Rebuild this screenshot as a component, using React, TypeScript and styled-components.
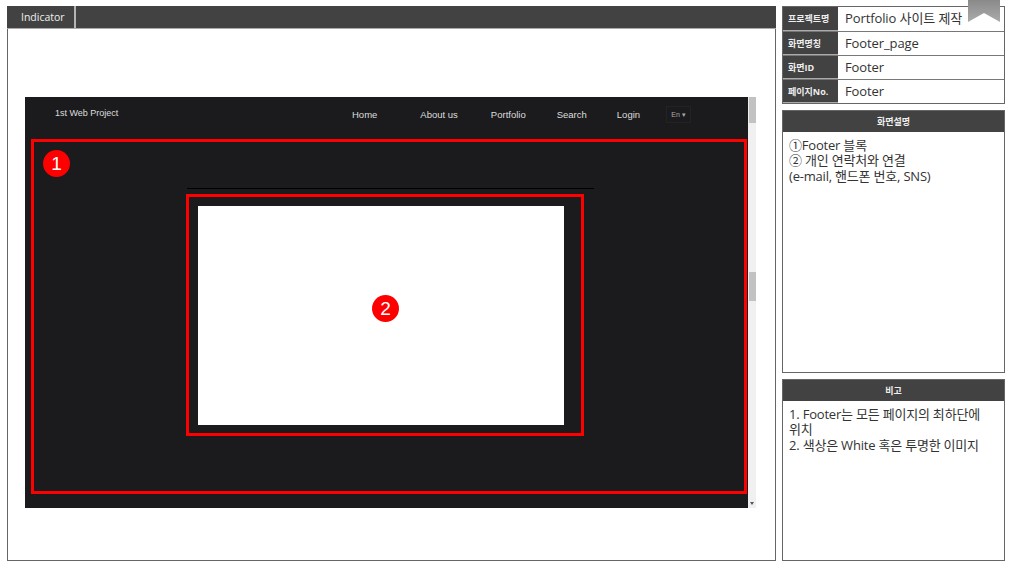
import React from 'react';
import styled, { createGlobalStyle } from 'styled-components';

const GlobalStyle = createGlobalStyle`
  html, body {
    margin: 0;
    padding: 0;
    background: #fff;
    overflow: hidden;
  }
  body {
    font-family: 'Open Sans', 'Noto Sans CJK KR', sans-serif;
    color: #333;
  }
`;

const Page = styled.div`
  width: 1012px;
  height: 568px;
  box-sizing: border-box;
  padding: 6px 7px 7px 7px;
  display: flex;
  gap: 6px;
`;

const MainPanel = styled.section`
  width: 769px;
  box-sizing: border-box;
  border: 1px solid #666;
  border-top: 0;
  display: flex;
  flex-direction: column;
`;

const IndicatorBar = styled.header`
  height: 22px;
  margin: 0 -1px;
  background: #424242;
  border-bottom: 1px solid #aaa;
  box-sizing: content-box;
  display: flex;
  flex-shrink: 0;
`;

const IndicatorTab = styled.div`
  width: 69px;
  box-sizing: border-box;
  border-right: 2px solid #b5b5b5;
  padding-left: 14px;
  color: #eee;
  font-size: 10.5px;
  line-height: 23px;
`;

const ScreenRow = styled.div`
  display: flex;
  margin: 68px 0 0 17px;
`;

const Screen = styled.div`
  width: 723px;
  height: 411px;
  background: #1b1b1d;
  display: flex;
  flex-direction: column;
`;

const SiteNav = styled.nav`
  height: 42px;
  flex-shrink: 0;
  box-sizing: border-box;
  padding-bottom: 8px;
  display: flex;
  align-items: center;
  font-family: 'Liberation Sans', Arial, sans-serif;
  font-size: 9.5px;
  color: #ddd;
`;

const Brand = styled.div`
  width: 297px;
  padding: 0 0 2px 30px;
  font-size: 9px;
`;

const NavItem = styled.div<{ $gap: number }>`
  margin-right: ${(p) => p.$gap}px;
`;

const LangButton = styled.div`
  width: 25px;
  height: 17px;
  border: 1px solid #222325;
  box-sizing: border-box;
  font-size: 7px;
  line-height: 15px;
  text-align: center;
  color: #aaa;
`;

const OuterFrame = styled.div`
  position: relative;
  width: 716px;
  height: 355px;
  margin-left: 6px;
  box-sizing: border-box;
  border: 3px solid #f00;
  padding: 46px 0 0 152px;
`;

const TopRule = styled.div`
  width: 407px;
  height: 1px;
  margin-left: 1px;
  background: #000;
`;

const InnerFrame = styled.div`
  position: relative;
  width: 398px;
  height: 242px;
  margin-top: 5px;
  box-sizing: border-box;
  border: 3px solid #f00;
  padding: 9px 17px 8px 9px;
`;

const WhiteBlock = styled.div`
  height: 100%;
  background: #fff;
`;

const Badge = styled.div<{ $left: number; $top: number }>`
  position: absolute;
  left: ${(p) => p.$left}px;
  top: ${(p) => p.$top}px;
  width: 27px;
  height: 27px;
  border-radius: 50%;
  background: #f00;
  color: #fff;
  font-family: 'Liberation Sans', Arial, sans-serif;
  font-size: 19px;
  line-height: 27px;
  text-align: center;
`;

const Scrollbar = styled.div`
  position: relative;
  width: 8px;
  height: 411px;
  background: #f0f0f0;
`;

const ScrollThumb = styled.div<{ $top: number; $height: number }>`
  position: absolute;
  left: 1px;
  top: ${(p) => p.$top}px;
  width: 7px;
  height: ${(p) => p.$height}px;
  background: #c2c2c2;
`;

const ScrollArrow = styled.div`
  position: absolute;
  left: 2px;
  bottom: 3px;
  width: 0;
  height: 0;
  border-left: 2px solid transparent;
  border-right: 2px solid transparent;
  border-top: 3px solid #555;
`;

const SideColumn = styled.aside`
  position: relative;
  width: 223px;
  display: flex;
  flex-direction: column;
  gap: 6px;
`;

const InfoTable = styled.div`
  height: 98px;
  flex-shrink: 0;
  box-sizing: border-box;
  border: 1px solid #666;
  display: grid;
  grid-template-rows: 25px 24px 24px 23px;
`;

const InfoRow = styled.div`
  display: flex;
  min-height: 0;
  box-sizing: border-box;
  overflow: hidden;
  border-bottom: 1px solid #777;
  &:last-child {
    border-bottom: 0;
  }
`;

const InfoLabel = styled.div`
  width: 55px;
  flex-shrink: 0;
  background: #424242;
  color: #eee;
  font-size: 9px;
  font-weight: 700;
  line-height: 23px;
  padding-left: 5px;
  box-sizing: border-box;
  white-space: nowrap;
  border-bottom: 1px solid #aaa;
`;

const InfoValue = styled.div`
  padding-left: 7px;
  color: #333;
  font-size: 13px;
  letter-spacing: -0.1px;
  line-height: 23px;
  white-space: nowrap;
`;

const NotePanel = styled.div<{ $height: number }>`
  height: ${(p) => p.$height}px;
  flex-shrink: 0;
  box-sizing: border-box;
  border: 1px solid #666;
  display: flex;
  flex-direction: column;
`;

const NoteHeader = styled.div`
  height: 21px;
  flex-shrink: 0;
  background: #424242;
  color: #eee;
  font-size: 9px;
  font-weight: 700;
  line-height: 21px;
  text-align: center;
`;

const NoteBody = styled.div`
  padding: 6px 6px 0 6px;
  color: #333;
  font-size: 13px;
  line-height: 15.3px;
  letter-spacing: -0.2px;
  word-break: keep-all;
`;

const NoteLine = styled.div``;

const Ribbon = styled.svg`
  position: absolute;
  left: 186px;
  top: -6px;
`;

const navItems = [
  { label: 'Home', gap: 43 },
  { label: 'About us', gap: 33 },
  { label: 'Portfolio', gap: 31 },
  { label: 'Search', gap: 30 },
  { label: 'Login', gap: 26 },
];

const infoRows = [
  { label: '프로젝트명', value: 'Portfolio 사이트 제작' },
  { label: '화면명칭', value: 'Footer_page' },
  { label: '화면ID', value: 'Footer' },
  { label: '페이지No.', value: 'Footer' },
];

const App: React.FC = () => {
  return (
    <>
      <GlobalStyle />
      <Page>
        <MainPanel>
          <IndicatorBar>
            <IndicatorTab>Indicator</IndicatorTab>
          </IndicatorBar>
          <ScreenRow>
            <Screen>
              <SiteNav>
                <Brand>1st Web Project</Brand>
                {navItems.map((item) => (
                  <NavItem key={item.label} $gap={item.gap}>
                    {item.label}
                  </NavItem>
                ))}
                <LangButton>En ▾</LangButton>
              </SiteNav>
              <OuterFrame>
                <Badge $left={9} $top={8}>1</Badge>
                <TopRule />
                <InnerFrame>
                  <WhiteBlock />
                  <Badge $left={183} $top={98}>2</Badge>
                </InnerFrame>
              </OuterFrame>
            </Screen>
            <Scrollbar>
              <ScrollThumb $top={0} $height={26} />
              <ScrollThumb $top={175} $height={29} />
              <ScrollArrow />
            </Scrollbar>
          </ScreenRow>
        </MainPanel>
        <SideColumn>
          <InfoTable>
            {infoRows.map((row) => (
              <InfoRow key={row.label}>
                <InfoLabel>{row.label}</InfoLabel>
                <InfoValue>{row.value}</InfoValue>
              </InfoRow>
            ))}
          </InfoTable>
          <NotePanel $height={263}>
            <NoteHeader>화면설명</NoteHeader>
            <NoteBody>
              <NoteLine>①Footer 블록</NoteLine>
              <NoteLine>② 개인 연락처와 연결</NoteLine>
              <NoteLine>(e-mail, 핸드폰 번호, SNS)</NoteLine>
            </NoteBody>
          </NotePanel>
          <NotePanel $height={182}>
            <NoteHeader>비고</NoteHeader>
            <NoteBody>
              <NoteLine>1. Footer는 모든 페이지의 최하단에</NoteLine>
              <NoteLine>위치</NoteLine>
              <NoteLine>2. 색상은 White 혹은 투명한 이미지</NoteLine>
            </NoteBody>
          </NotePanel>
          <Ribbon width="32" height="23" viewBox="0 0 32 23">
            <defs>
              <linearGradient id="ribbonFill" x1="0" y1="0" x2="0" y2="1">
                <stop offset="0" stopColor="#8a8a8a" />
                <stop offset="1" stopColor="#ababab" />
              </linearGradient>
            </defs>
            <path d="M0 0H32V22L16 13L0 22Z" fill="url(#ribbonFill)" />
          </Ribbon>
        </SideColumn>
      </Page>
    </>
  );
};

export default App;
